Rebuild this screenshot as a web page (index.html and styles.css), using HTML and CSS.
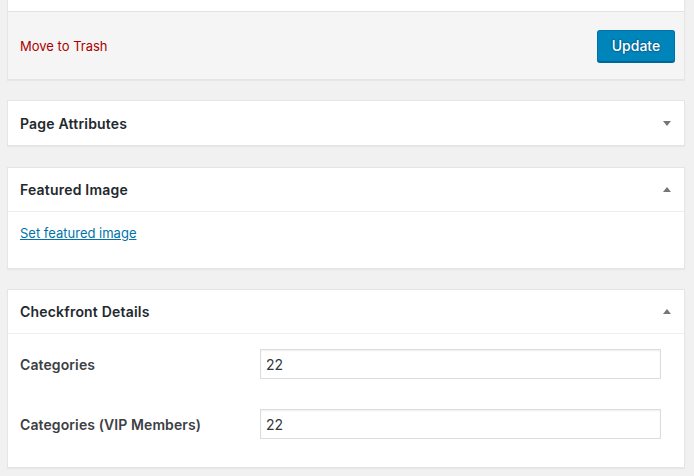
FILE: index.html
```html
<!DOCTYPE html>
<html lang="en">
<head>
<meta charset="utf-8">
<title>Edit Page</title>
<link rel="stylesheet" href="styles.css">
</head>
<body>
<div class="sidebar">
  <div class="postbox publish">
    <div class="misc"></div>
    <div class="major">
      <a class="trash" href="#">Move to Trash</a>
      <button class="btn-primary" type="button">Update</button>
    </div>
  </div>

  <div class="postbox collapsed">
    <div class="hndle">
      <h2>Page Attributes</h2>
      <svg class="toggle" width="8" height="5" viewBox="0 0 8 5"><path d="M0 0H8L4 5Z"/></svg>
    </div>
  </div>

  <div class="postbox">
    <div class="hndle">
      <h2>Featured Image</h2>
      <svg class="toggle" width="8" height="5" viewBox="0 0 8 5"><path d="M0 5H8L4 0Z"/></svg>
    </div>
    <div class="inside featured">
      <a class="link" href="#">Set featured image</a>
    </div>
  </div>

  <div class="postbox">
    <div class="hndle">
      <h2>Checkfront Details</h2>
      <svg class="toggle" width="8" height="5" viewBox="0 0 8 5"><path d="M0 5H8L4 0Z"/></svg>
    </div>
    <div class="inside fields">
      <div class="row">
        <label class="lbl" for="cat">Categories</label>
        <input class="txt" id="cat" type="text" value="22">
      </div>
      <div class="row">
        <label class="lbl" for="vip">Categories (VIP Members)</label>
        <input class="txt" id="vip" type="text" value="22">
      </div>
    </div>
  </div>
</div>
</body>
</html>
```

FILE: styles.css
```css
* { box-sizing: border-box; }

html, body {
  margin: 0;
  padding: 0;
  background: #f1f1f1;
}

body {
  font-family: Inter, "Noto Sans", "Liberation Sans", sans-serif;
  color: #23282d;
  font-size: 13px;
}

.sidebar {
  margin-left: 7px;
  width: 678px;
}

.postbox {
  background: #fff;
  border: 1px solid #e5e5e5;
  box-shadow: 0 1px 1px rgba(0, 0, 0, 0.04);
  margin-bottom: 20px;
}

.publish {
  border-top: 0;
}

.misc {
  height: 11px;
  background: #fff;
}

.major {
  height: 68px;
  background: #f5f5f5;
  border-top: 1px solid #e2e2e2;
  display: flex;
  align-items: center;
  justify-content: space-between;
  padding: 0 9px 0 12px;
}

.trash {
  color: #a00;
  text-decoration: none;
  font-size: 13px;
}

.btn-primary {
  height: 32px;
  width: 78px;
  padding: 0 12px 1px;
  font-family: inherit;
  font-size: 14px;
  font-weight: 500;
  color: #fff;
  background: #0085ba;
  border: 1px solid #0073aa;
  border-bottom-color: #006799;
  border-radius: 3px;
  box-shadow: 0 1px 0 #006799;
  text-shadow: 0 -1px 1px #006799, 1px 0 1px #006799, 0 1px 1px #006799, -1px 0 1px #006799;
  cursor: pointer;
}

.hndle {
  height: 44px;
  display: flex;
  align-items: center;
  justify-content: space-between;
  padding: 0 13px 0 12px;
  border-bottom: 1px solid #eee;
}

.collapsed {
  margin-bottom: 21px;
}

.collapsed .hndle {
  height: 44px;
  border-bottom: 0;
}

.hndle h2 {
  margin: 0;
  font-size: 14px;
  font-weight: 600;
  letter-spacing: 0.2px;
  color: #23282d;
}

.toggle {
  fill: #72777c;
  display: block;
}

.inside {
  padding: 0 12px;
}

.featured {
  height: 56px;
  padding-top: 12px;
}

.link {
  display: inline-block;
  line-height: 18px;
  color: #0073aa;
  font-size: 13px;
}

.fields {
  padding-bottom: 13px;
}

.row {
  height: 60px;
  display: flex;
  align-items: center;
}

.lbl {
  width: 240px;
  flex: none;
  font-size: 14px;
  font-weight: 600;
  letter-spacing: 0.1px;
  color: #3c4043;
}

.txt {
  width: 401px;
  height: 30px;
  border: 1px solid #ddd;
  box-shadow: inset 0 1px 2px rgba(0, 0, 0, 0.07);
  padding: 0 5px;
  font-family: inherit;
  font-size: 14px;
  color: #32373c;
  background: #fff;
  outline: none;
}
```
